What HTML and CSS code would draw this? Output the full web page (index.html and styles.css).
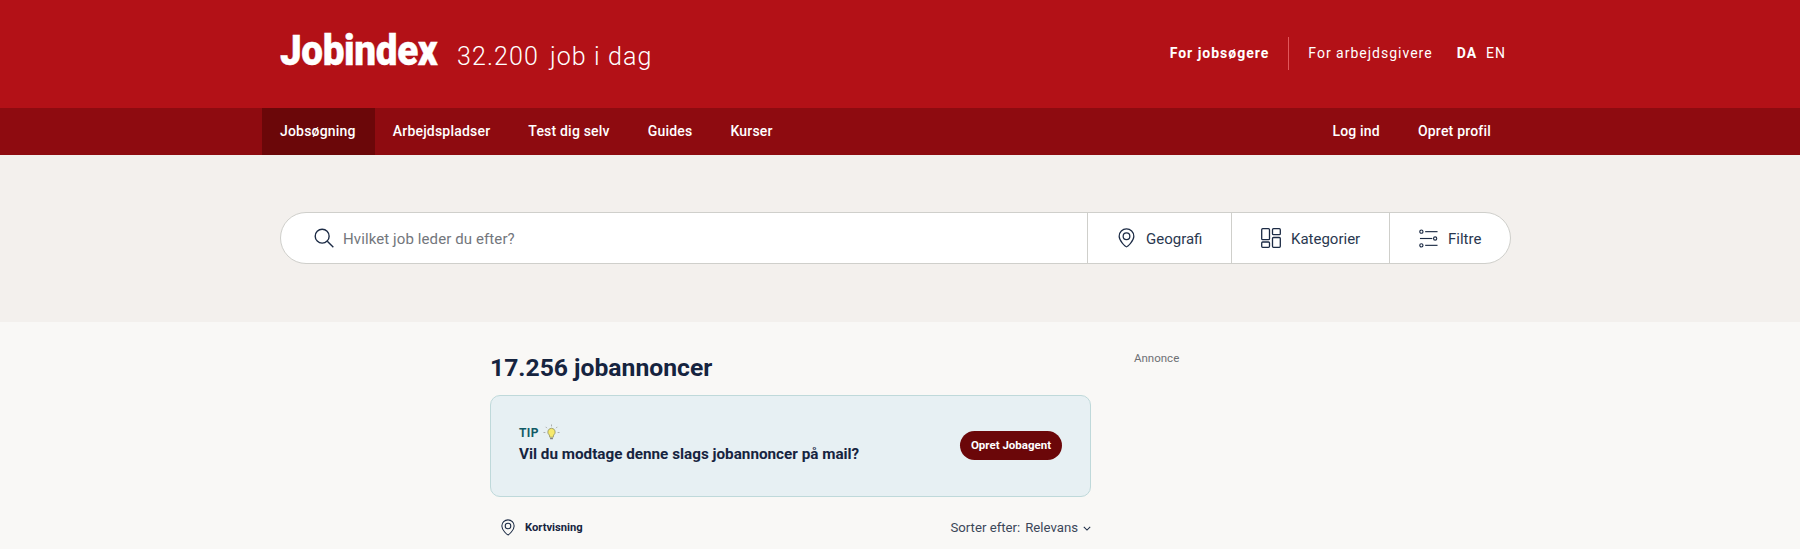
FILE: index.html
```html
<!DOCTYPE html>
<html lang="da">
<head>
    <meta charset="UTF-8">
    <meta name="viewport" content="width=device-width, initial-scale=1.0">
    <title>Jobindex</title>
    <link rel="stylesheet" href="styles.css">
</head>
<body>
    <header class="top">
        <div class="wrap top-inner">
            <div class="brand">
                <span class="logo">Jobindex</span>
                <span class="count">32.200</span>
                <span class="count-label">job i dag</span>
            </div>
            <div class="top-links">
                <a class="top-link strong">For jobsøgere</a>
                <span class="top-sep"></span>
                <a class="top-link">For arbejdsgivere</a>
                <a class="top-link strong lang">DA</a>
                <a class="top-link lang-en">EN</a>
            </div>
        </div>
    </header>
    <nav class="menu">
        <div class="wrap menu-inner">
            <a class="menu-item active">Jobsøgning</a>
            <a class="menu-item">Arbejdspladser</a>
            <a class="menu-item">Test dig selv</a>
            <a class="menu-item">Guides</a>
            <a class="menu-item">Kurser</a>
            <a class="menu-item push">Log ind</a>
            <a class="menu-item">Opret profil</a>
        </div>
    </nav>
    <section class="search-band">
        <div class="search">
            <div class="search-field">
                <svg class="icon" viewBox="0 0 24 24" width="22" height="22" fill="none" stroke="#1c2b45" stroke-width="1.5"><circle cx="10" cy="10" r="7.6"/><path d="M15.6 15.6l6.6 6.6"/></svg>
                <span class="placeholder">Hvilket job leder du efter?</span>
            </div>
            <div class="search-btn geo">
                <svg viewBox="0 0 20 24" width="17" height="20" fill="none" stroke="#1c2b45" stroke-width="1.5"><path d="M10 22.5c-1 0-8.8-6.6-8.8-12.6a8.8 8.8 0 0 1 17.6 0c0 6-7.8 12.6-8.8 12.6z"/><circle cx="10" cy="9.8" r="4"/></svg>
                <span>Geografi</span>
            </div>
            <div class="search-btn cat">
                <svg viewBox="0 0 20 20" width="20" height="20" fill="none" stroke="#1c2b45" stroke-width="1.3"><rect x="0.7" y="0.7" width="7.8" height="11" rx="1"/><rect x="11.5" y="0.7" width="7.8" height="6" rx="1"/><rect x="0.7" y="14" width="7.8" height="5.3" rx="1"/><rect x="11.5" y="9.5" width="7.8" height="9.8" rx="1"/></svg>
                <span>Kategorier</span>
            </div>
            <div class="search-btn filt">
                <svg viewBox="0 0 20 20" width="19" height="19" fill="none" stroke="#1c2b45" stroke-width="1.2"><circle cx="2.5" cy="2.8" r="1.7"/><path d="M6.5 2.8h13"/><path d="M1 10h13"/><circle cx="17" cy="10" r="1.7"/><circle cx="2.5" cy="17.2" r="1.7"/><path d="M6.5 17.2h13"/></svg>
                <span>Filtre</span>
            </div>
        </div>
    </section>
    <main class="content">
        <div class="results">
            <h1 class="results-title">17.256 jobannoncer</h1>
            <div class="tip">
                <div>
                    <div class="tip-label">TIP
                        <svg viewBox="0 0 18 18" width="17" height="17" fill="none"><path d="M9 4.5a4 4 0 0 0-2.3 7.2l.5 2.3h3.6l.5-2.3A4 4 0 0 0 9 4.5z" fill="#f6e96b" stroke="#8a8a5a" stroke-width=".8"/><path d="M7.5 15.5h3" stroke="#777" stroke-width="1.2"/><path d="M9 .5v2M2.8 3l1.4 1.4M15.2 3l-1.4 1.4M.5 9h2M15.5 9h2" stroke="#999" stroke-width=".8"/></svg>
                    </div>
                    <div class="tip-text">Vil du modtage denne slags jobannoncer på mail?</div>
                </div>
                <a class="tip-btn">Opret Jobagent</a>
            </div>
            <div class="tools">
                <div class="map-link">
                    <svg viewBox="0 0 20 24" width="14" height="17" fill="none" stroke="#1c2b45" stroke-width="1.5"><path d="M10 22.5c-1 0-8.8-6.6-8.8-12.6a8.8 8.8 0 0 1 17.6 0c0 6-7.8 12.6-8.8 12.6z"/><circle cx="10" cy="9.8" r="4"/></svg>
                    <span>Kortvisning</span>
                </div>
                <div class="sort">
                    <span>Sorter efter:</span>
                    <span class="sort-value">Relevans</span>
                    <svg viewBox="0 0 10 6" width="8" height="5" fill="none" stroke="#1c2b45" stroke-width="1.3"><path d="M1 1l4 4 4-4"/></svg>
                </div>
            </div>
        </div>
        <aside class="ad-label">Annonce</aside>
    </main>
</body>
</html>
```

FILE: styles.css
```css
* {
    margin: 0;
    box-sizing: border-box;
}

html, body {
    height: 549px;
    overflow: hidden;
}

body {
    font-family: Roboto, sans-serif;
    background-color: #f9f8f6;
    color: #16243f;
}

.wrap {
    width: 1276px;
    margin-left: 262px;
}

/* top bar */
.top {
    height: 108px;
    background-color: #b31117;
    color: white;
}

.top-inner {
    display: flex;
    justify-content: space-between;
    align-items: center;
    height: 108px;
    padding: 0 32px 0 18px;
}

.brand {
    display: flex;
    align-items: baseline;
    margin-top: -7px;
}

.logo {
    display: inline-block;
    width: 159px;
    font-size: 42px;
    font-weight: 900;
    letter-spacing: -0.4px;
    -webkit-text-stroke: 0.4px white;
    transform: scaleX(0.92);
    transform-origin: left;
}

.count, .count-label {
    font-size: 25px;
    font-weight: 300;
    letter-spacing: 1.1px;
}

.count {
    margin-left: 18px;
}

.count-label {
    margin-left: 11px;
}

.top-links {
    display: flex;
    align-items: center;
    margin-top: -2px;
    font-size: 14px;
    letter-spacing: 1px;
}

.top-link.strong {
    font-weight: 700;
}

.top-sep {
    width: 1px;
    height: 33px;
    margin: 0 19px;
    background-color: #e2575b;
}

.lang {
    margin-left: 24px;
}

.lang-en {
    margin-left: 9px;
}

/* main menu */
.menu {
    height: 47px;
    background-color: #8e0b10;
}

.menu-inner {
    display: flex;
    height: 47px;
    padding-right: 27px;
}

.menu-item {
    display: flex;
    align-items: center;
    padding: 0 18px 2px;
    margin-right: 2px;
    color: white;
    font-size: 14px;
    font-weight: 500;
    letter-spacing: 0.2px;
}

.menu-item.active {
    margin-right: 0;
    padding-right: 19px;
    background-color: #6b0709;
}

.menu-item.push {
    margin-left: auto;
}

/* search */
.search-band {
    height: 167px;
    padding: 57px 0 0 280px;
    background-color: #f3f0ed;
}

.search {
    display: flex;
    width: 1231px;
    height: 52px;
    background-color: white;
    border: 1px solid #cfcfcb;
    border-radius: 26px;
}

.search-field {
    display: flex;
    flex: 1;
    align-items: center;
    gap: 8px;
    padding-left: 32px;
}

.placeholder {
    margin-top: 1px;
    font-size: 15px;
    letter-spacing: 0.1px;
    color: #73767c;
}

.search-btn {
    display: flex;
    align-items: center;
    gap: 10px;
    border-left: 1px solid #cfcfcb;
    font-size: 15px;
    color: #2a3850;
    padding-left: 29px;
}

.search-btn span {
    margin-top: 1px;
}

.geo {
    width: 144px;
    gap: 11px;
    padding-left: 30px;
}

.cat {
    width: 158px;
}

.filt {
    width: 121px;
}

/* results */
.content {
    display: flex;
    padding-left: 490px;
}

.results {
    width: 601px;
}

.results-title {
    margin-top: 30px;
    font-size: 24.7px;
    line-height: 32px;
    font-weight: 700;
}

.tip {
    display: flex;
    justify-content: space-between;
    align-items: center;
    height: 102px;
    margin-top: 11px;
    padding: 0 28px 5px 28px;
    background-color: #e7f0f3;
    border: 1px solid #bfd9da;
    border-radius: 10px;
}

.tip-label {
    display: flex;
    align-items: center;
    gap: 4px;
    font-size: 12px;
    font-weight: 700;
    letter-spacing: 0.4px;
    color: #115a66;
}

.tip-text {
    margin-top: 4px;
    font-size: 15.25px;
    font-weight: 700;
}

.tip-btn {
    width: 102px;
    margin-top: 4px;
    padding: 7px 0;
    background-color: #6b0709;
    border-radius: 15px;
    color: white;
    font-size: 11.5px;
    font-weight: 700;
    line-height: 15px;
    text-align: center;
}

.tools {
    display: flex;
    justify-content: space-between;
    align-items: center;
    margin-top: 22px;
    padding-left: 11px;
}

.map-link {
    display: flex;
    align-items: center;
    gap: 10px;
    font-size: 11.2px;
    font-weight: 700;
}

.sort {
    display: flex;
    align-items: center;
    gap: 5px;
    font-size: 13.2px;
    color: #3c4759;
}

.sort svg {
    margin-top: 2px;
}

.ad-label {
    margin: 29px 0 0 43px;
    font-size: 11.5px;
    color: #6e7074;
}
```
